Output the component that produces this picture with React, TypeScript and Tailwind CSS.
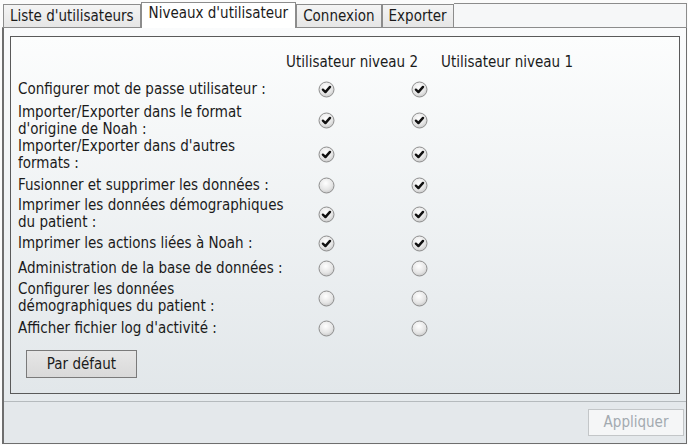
import React from "react";

type Right = {
  label: string[];
  level2: boolean;
  level1: boolean;
  h: string;
};

const rights: Right[] = [
  { label: ["Configurer mot de passe utilisateur :"], level2: true, level1: true, h: "h-[30px]" },
  { label: ["Importer/Exporter dans le format", "d'origine de Noah :"], level2: true, level1: true, h: "h-[33px]" },
  { label: ["Importer/Exporter dans d'autres", "formats :"], level2: true, level1: true, h: "h-[35px]" },
  { label: ["Fusionner et supprimer les données :"], level2: false, level1: true, h: "h-[26px]" },
  { label: ["Imprimer les données démographiques", "du patient :"], level2: true, level1: true, h: "h-[32px]" },
  { label: ["Imprimer les actions liées à Noah :"], level2: true, level1: true, h: "h-[26px]" },
  { label: ["Administration de la base de données :"], level2: false, level1: false, h: "h-[24px]" },
  { label: ["Configurer les données", "démographiques du patient :"], level2: false, level1: false, h: "h-[36px]" },
  { label: ["Afficher fichier log d'activité :"], level2: false, level1: false, h: "h-[24px]" },
];

const tabs = ["Liste d'utilisateurs", "Niveaux d'utilisateur", "Connexion", "Exporter"];

const Radio = ({ checked }: { checked: boolean }) => (
  <svg width="17" height="17" viewBox="0 0 17 17">
    <defs>
      <radialGradient id="rb" cx="45%" cy="35%" r="65%">
        <stop offset="0%" stopColor="#ffffff" />
        <stop offset="70%" stopColor="#e4e4e4" />
        <stop offset="100%" stopColor="#c8c8c8" />
      </radialGradient>
    </defs>
    <circle cx="8.5" cy="8.5" r="7.5" fill="url(#rb)" stroke="#8f8f8f" strokeWidth="1" />
    {checked && (
      <path d="M4.9 8.7 L7.4 11.1 L12 5.9" fill="none" stroke="#111" strokeWidth="2.4" strokeLinecap="round" strokeLinejoin="round" />
    )}
  </svg>
);

const App: React.FC = () => {
  return (
    <div className="w-[688px] h-[445px] bg-[#fbfbfb] pt-[2px] pl-[2px] pr-[1px] pb-[1px] text-[15px] leading-[17px] text-[#1b1b1b] [font-family:'DejaVu_Sans_Condensed','DejaVu_Sans',sans-serif] font-stretch-condensed flex flex-col">
      {/* tab strip */}
      <div className="flex items-end h-[26px]">
        <div className="w-[1px] h-[24px] border-b border-[#8c8c8c]" />
        {tabs.map((t, i) =>
          i === 1 ? (
            <div key={t} className="h-[26px] px-[7px] bg-white border border-b-0 border-[#8c8c8c] flex items-start pt-[2px]">
              {t}
            </div>
          ) : (
            <div key={t} className="h-[24px] px-[6px] bg-gradient-to-b from-[#f4f4f4] to-[#e6e6e6] border border-[#8c8c8c] flex items-center">
              {t}
            </div>
          )
        )}
        <div className="flex-1 h-[25px] bg-[#f6f7f8] border-t border-r border-b border-[#8c8c8c]" />
      </div>

      {/* tab page */}
      <div className="flex-1 flex flex-col border-l-2 border-r border-b border-[#6e6e6e] bg-gradient-to-b from-[#fafbfc] to-[#e3e8eb]">
        <div className="pt-[8px] px-[6px] pb-[7px]">
          <div className="h-[358px] border border-[#5a5a5a] bg-gradient-to-b from-[#fcfdfd] to-[#e2e7ea] pl-[7px] pt-[13px]">
            <div className="flex h-[24px] items-center">
              <div className="w-[268px]" />
              <div className="w-[155px]">Utilisateur niveau 2</div>
              <div>Utilisateur niveau 1</div>
            </div>
            {rights.map((r, i) => (
              <div key={i} className={`flex items-center ${r.h}`}>
                <div className="w-[268px] leading-[16px]">
                  {r.label.map((l) => (
                    <div key={l} className={r.label.length > 1 ? "h-[17px]" : ""}>{l}</div>
                  ))}
                </div>
                <div className="w-[125px] pl-[32px] flex">
                  <Radio checked={r.level2} />
                </div>
                <div className="flex">
                  <Radio checked={r.level1} />
                </div>
              </div>
            ))}
            <button className="mt-[10px] ml-[8px] w-[111px] h-[28px] bg-gradient-to-b from-[#e6e6e6] to-[#d9d9d9] border border-[#7a7a7a]">
              Par défaut
            </button>
          </div>
        </div>
        <div className="border-t border-[#b5babd] h-px" />
        <div className="flex-1 flex justify-end items-center pr-[2px] bg-[#e4e8eb]">
          <button className="w-[96px] h-[27px] bg-[#f5f6f7] border border-[#c3c6c8] text-[#a3aab0]">
            Appliquer
          </button>
        </div>
      </div>
    </div>
  );
};

export default App;
